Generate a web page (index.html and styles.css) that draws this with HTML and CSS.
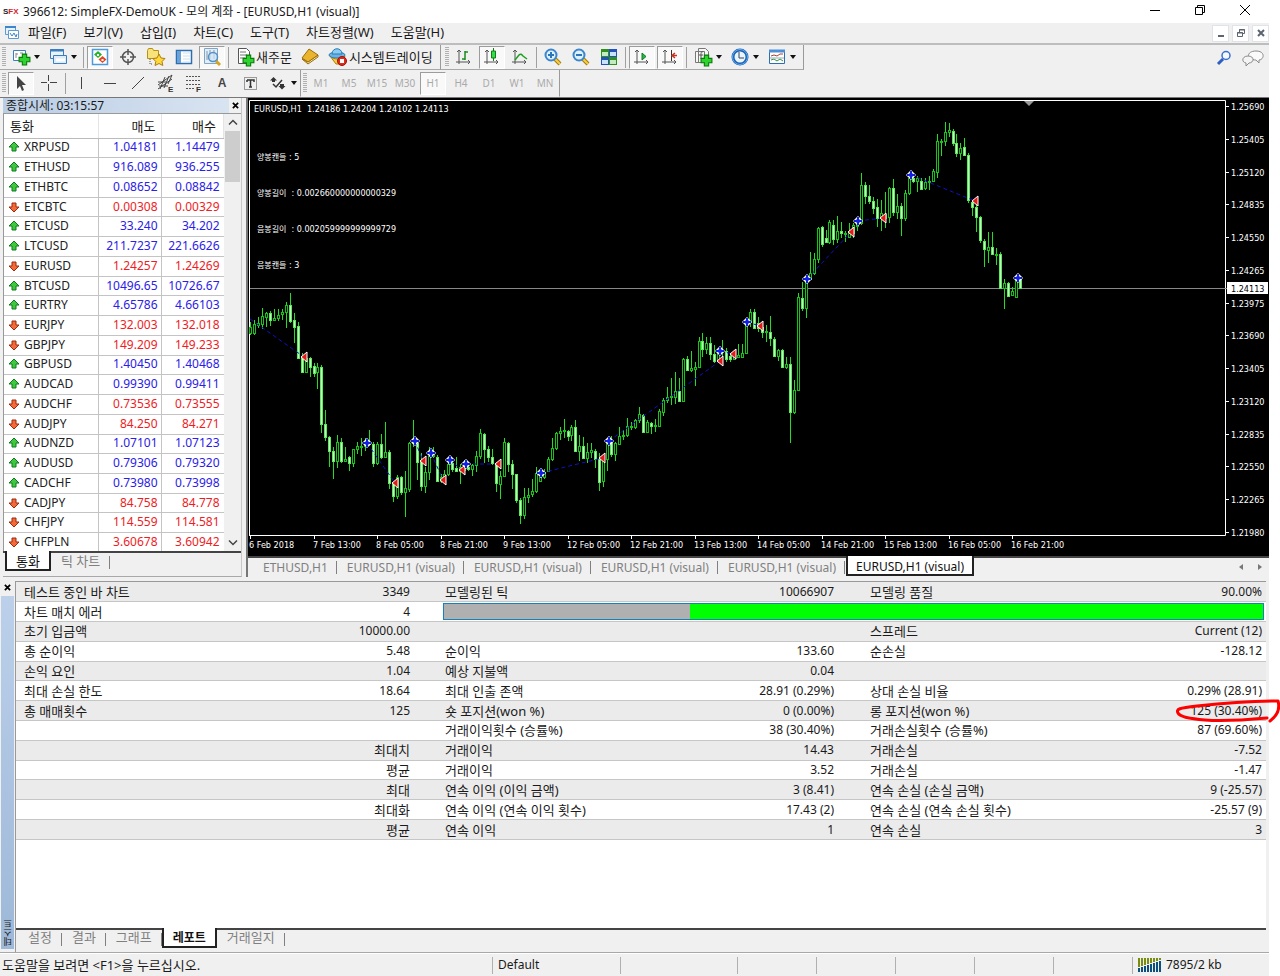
FILE: index.html
```html
<!DOCTYPE html>
<html lang="ko">
<head>
<meta charset="utf-8">
<title>396612: SimpleFX-DemoUK</title>
<link rel="stylesheet" href="styles.css">
</head>
<body>
<svg class="defs" aria-hidden="true">
  <symbol id="plus" viewBox="0 0 12 12"><path d="M4 1h4v3h3v4H8v3H4V8H1V4h3z" fill="#2fd32f" stroke="#087a08"/></symbol>
  <symbol id="axes" viewBox="0 0 20 20"><path d="M5 3v14M2 15h14M3 5l2-2 2 2M14 13l2 2-2 2" fill="none" stroke="#555"/></symbol>
  <symbol id="lens" viewBox="0 0 20 20"><path d="M12 12l5 5" stroke="#a87a10" stroke-width="4"/><path d="M12 12l5 5" stroke="#f5cf45" stroke-width="2"/><circle cx="8" cy="8" r="5.500" fill="#dff1fc" stroke="#3b86cc" stroke-width="2"/></symbol>
</svg>

<header class="titlebar">
  <span class="logo"><i>S</i>FX</span>
  <h1>396612: SimpleFX-DemoUK - 모의 계좌 - [EURUSD,H1 (visual)]</h1>
  <div class="winbtns">
    <button aria-label="최소화"><svg viewBox="0 0 12 12"><path d="M1 6.500h10" stroke="#000"/></svg></button>
    <button aria-label="이전 크기로"><svg viewBox="0 0 12 12"><path d="M1.500 3.500h7v7h-7zM3.500 3V1.500h7v7H9" fill="none" stroke="#000"/></svg></button>
    <button aria-label="닫기"><svg viewBox="0 0 12 12"><path d="M1 1l10 10M11 1L1 11" stroke="#000"/></svg></button>
  </div>
</header>

<div class="window">
<nav class="menubar">
  <svg class="menuicon" viewBox="0 0 16 16"><path d="M1.500 1.500h10v8h-10z" fill="#e4f1fb" stroke="#5d9bd0"/><path d="M1 2h11" stroke="#3b86cc" stroke-width="2"/><path d="M4.500 5.500h10v8h-10z" fill="#fff" stroke="#5d9bd0"/><path d="M6 8l2 3 2-3 2 4 1-3" fill="none" stroke="#3b86cc"/></svg>
  <button>파일(F)</button><button>보기(V)</button><button>삽입(I)</button><button>차트(C)</button><button>도구(T)</button><button>차트정렬(W)</button><button>도움말(H)</button>
  <div class="mdi">
    <button aria-label="차트 최소화"><svg viewBox="0 0 12 12"><path d="M3 9h6" stroke="#5b6470" stroke-width="2"/></svg></button>
    <button aria-label="차트 복원"><svg viewBox="0 0 12 12"><path d="M2.500 5.500h5v4h-5zM4.500 5V2.500h5v4H8M2 6h6M4 3h6" fill="none" stroke="#5b6470"/></svg></button>
    <button aria-label="차트 닫기"><svg viewBox="0 0 12 12"><path d="M3 3l6 6M9 3L3 9" stroke="#5b6470" stroke-width="2"/></svg></button>
  </div>
</nav>

<div class="toolrow">
  <div class="toolbar">
    <span class="grip"></span>
    <button class="tb drop" aria-label="새 차트"><svg viewBox="0 0 20 20"><path d="M2.500 3.500h12v10h-12z" fill="#fff" stroke="#3b7fc0"/><path d="M5 6v5M5 7h2M9 6h3" stroke="#888"/><use href="#plus" x="7" y="6" width="13" height="13"/></svg></button>
    <button class="tb drop" aria-label="프로파일"><svg viewBox="0 0 20 20"><path d="M2.500 2.500h13v9h-13z" fill="#e8f3fc" stroke="#3b7fc0"/><path d="M2 3.500h14" stroke="#3b7fc0" stroke-width="2"/><path d="M5.500 8.500h13v8h-13z" fill="#dcecf9" stroke="#3b7fc0"/><path d="M8 13h9" stroke="#fff" stroke-width="3"/></svg></button>
    <span class="sep"></span>
    <button class="tb on" aria-label="종합시세"><svg viewBox="0 0 20 20"><path d="M2.500 2.500h15v15h-15z" fill="#fff" stroke="#4a9ade" stroke-width="1.500"/><path d="M8 4l4 3.500-4 3.500-4-3.500z" fill="#28b428"/><path d="M12.500 9l4 3.500-4 3.500-4-3.500z" fill="#e04a24"/><path d="M7 7h2v2H7zM11.500 12h2v2h-2z" fill="#fff"/></svg></button>
    <button class="tb" aria-label="데이터 창"><svg viewBox="0 0 20 20"><circle cx="10" cy="10" r="5.500" fill="none" stroke="#555" stroke-width="1.500"/><path d="M10 2v6M10 12v6M2 10h6M12 10h6" stroke="#555" stroke-width="1.500"/></svg></button>
    <button class="tb" aria-label="네비게이터"><svg viewBox="0 0 20 20"><path d="M1.500 3.500l1-2h4l1 2h5v8h-11z" fill="#f8e27c" stroke="#b8920e"/><path d="M4 12v5h3" stroke="#555" fill="none" stroke-dasharray="1 1"/><path d="M13 7l2 4 4 .5-3 3 .8 4L13 16.500l-4 2 .8-4-3-3 4.200-.5z" fill="#ffd83e" stroke="#b07d08"/></svg></button>
    <button class="tb" aria-label="터미널"><svg viewBox="0 0 20 20"><path d="M2.500 3.500h15v13h-15z" fill="#fff" stroke="#2d6eb0" stroke-width="1.500"/><path d="M3 4h4v12H3z" fill="#6ba3d8"/><path d="M9 6h7M9 9h7M9 12h7M9 15h7" stroke="#cfe0f0"/></svg></button>
    <button class="tb on" aria-label="전략 테스터"><svg viewBox="0 0 20 20"><path d="M2.500 1.500h13v15h-13z" fill="#e3eef8" stroke="#7fa5c8"/><path d="M5 4v9M8 3v9M12 3v9" stroke="#8096aa"/><path d="M14 14l4 4" stroke="#d9a51c" stroke-width="3"/><circle cx="11" cy="10" r="4.500" fill="#cfe6f8aa" stroke="#5690c4" stroke-width="1.500"/></svg></button>
    <span class="sep"></span>
    <button class="tb text"><svg viewBox="0 0 20 20"><path d="M3.500 1.500h8l3 3v12h-11z" fill="#fff" stroke="#555"/><path d="M5 5h6M5 8h7M5 11h5" stroke="#777"/><use href="#plus" x="7" y="7" width="13" height="13"/></svg>새주문</button>
    <button class="tb" aria-label="메타에디터"><svg viewBox="0 0 20 20"><path d="M2 12l6 5 10-7v-2L8 15z" fill="#f6e7b0" stroke="#9a6c0c"/><path d="M2 11l7-9 9 6-10 7z" fill="#eab52d" stroke="#9a6c0c"/></svg></button>
    <button class="tb text"><svg viewBox="0 0 20 20"><path d="M2 9c3 4 12 4 15 0l-3 8H8z" fill="#f4ce3c" stroke="#b07d08"/><ellipse cx="9" cy="8" rx="8" ry="3" fill="#69b3e4" stroke="#2b7db5"/><path d="M4 7c0-7 10-7 10 0z" fill="#8accf3" stroke="#2b7db5"/><circle cx="14" cy="14" r="4.500" fill="#e02a1a" stroke="#a01208"/><path d="M12 12h4v4h-4z" fill="#fff"/></svg>시스템트레이딩</button>
  </div>
  <div class="toolbar">
    <span class="grip"></span>
    <button class="tb" aria-label="바 차트"><svg viewBox="0 0 20 20"><use href="#axes"/><path d="M11 4v9M11 5h3M8 12h3" stroke="#1c8a1c" stroke-width="1.500"/></svg></button>
    <button class="tb on" aria-label="캔들 차트"><svg viewBox="0 0 20 20"><use href="#axes"/><path d="M11.500 1v13" stroke="#167a16"/><path d="M9.500 4h4v7h-4z" fill="#2fe04a" stroke="#167a16"/></svg></button>
    <button class="tb" aria-label="라인 차트"><svg viewBox="0 0 20 20"><use href="#axes"/><path d="M5 13l4-5c2-2 3 0 4 1l4 3" stroke="#1ea01e" fill="none" stroke-width="1.500"/></svg></button>
    <span class="sep"></span>
    <button class="tb" aria-label="확대"><svg viewBox="0 0 20 20"><use href="#lens"/><path d="M5 8h6M8 5v6" stroke="#2f75ba" stroke-width="2"/></svg></button>
    <button class="tb" aria-label="축소"><svg viewBox="0 0 20 20"><use href="#lens"/><path d="M5 8h6" stroke="#2f75ba" stroke-width="2"/></svg></button>
    <button class="tb" aria-label="창 배열"><svg viewBox="0 0 20 20"><path d="M2 2h8v8H2zM10 10h8v8h-8z" fill="#2f8f1f"/><path d="M10 2h8v8h-8zM2 10h8v8H2z" fill="#2452b8"/><path d="M3 5h6v4H3zM11 5h6v4h-6zM3 13h6v4H3zM11 13h6v4h-6z" fill="#c4ecc0"/><path d="M11 5h6v4h-6zM3 13h6v4H3z" fill="#c8e2fa"/></svg></button>
    <span class="sep"></span>
    <button class="tb on" aria-label="자동 스크롤"><svg viewBox="0 0 20 20"><use href="#axes"/><path d="M10 6l4 3.500-4 3.500z" fill="#28b848" stroke="#117a22"/></svg></button>
    <button class="tb on" aria-label="차트 이동"><svg viewBox="0 0 20 20"><use href="#axes"/><path d="M11.500 3v11" stroke="#333"/><path d="M17 8.500h-4M15 6l-3 2.500 3 2.500" stroke="#c8321c" fill="none" stroke-width="1.500"/></svg></button>
    <span class="sep"></span>
    <button class="tb drop" aria-label="지표"><svg viewBox="0 0 20 20"><path d="M2.500 4.500h9v11h-9zM5.500 1.500h7l3 3v11h-10z" fill="#f6f6f6" stroke="#777"/><path d="M10 5c-2-1-2 1-2 3v4M6 8h4" stroke="#555" fill="none"/><use href="#plus" x="7" y="7" width="13" height="13"/></svg></button>
    <button class="tb drop" aria-label="주기"><svg viewBox="0 0 20 20"><circle cx="10" cy="10" r="7" fill="#e9f5fd" stroke="#1e62b4" stroke-width="3"/><circle cx="10" cy="10" r="7.500" fill="none" stroke="#60aaf0"/><path d="M9 5v6h5" fill="none" stroke="#345"/></svg></button>
    <button class="tb drop" aria-label="템플릿"><svg viewBox="0 0 20 20"><path d="M2.500 3.500h15v13h-15z" fill="#fff" stroke="#2f6fb0"/><path d="M2 4h16" stroke="#4a90d9" stroke-width="3"/><path d="M4 9l3-1 3 1 3-2h3" stroke="#b0412c" fill="none"/><path d="M4 13l3-1 3 2 3-2 3 2" stroke="#2a9a3a" fill="none"/><path d="M3 11h14" stroke="#9ab"/></svg></button>
  </div>
  <div class="toolend">
    <button aria-label="검색"><svg viewBox="0 0 16 16"><circle cx="10" cy="5.500" r="4" fill="#f4f8ff" stroke="#3a6fd0" stroke-width="1.500"/><path d="M7 9l-5 5" stroke="#2c5fc4" stroke-width="3"/></svg></button>
    <button aria-label="채팅"><svg class="chat" viewBox="0 0 22 16"><path d="M14 1c10 0 8 9 3 9v3l-3-3C4 10 4 1 14 1z" fill="#fafafa" stroke="#8a8a8a"/><path d="M6 6c7 0 6 7 1 7l-3 3v-3C-1 12 0 6 6 6z" fill="#f4f4f4" stroke="#8a8a8a"/></svg></button>
  </div>
</div>

<div class="toolrow second">
  <div class="toolbar">
    <span class="grip"></span>
    <button class="tb on" aria-label="커서"><svg viewBox="0 0 20 20"><path d="M6 3v13l3-3 2 5 2-1-2-5h4z" fill="#444"/></svg></button>
    <button class="tb" aria-label="십자선"><svg viewBox="0 0 20 20"><path d="M9.500 2v6M9.500 11v7M2 9.500h6M11 9.500h7" stroke="#444"/></svg></button>
    <span class="sep"></span>
    <button class="tb" aria-label="수직선"><svg viewBox="0 0 20 20"><path d="M9.500 4v12" stroke="#444"/></svg></button>
    <button class="tb" aria-label="수평선"><svg viewBox="0 0 20 20"><path d="M4 10.500h12" stroke="#444"/></svg></button>
    <button class="tb" aria-label="추세선"><svg viewBox="0 0 20 20"><path d="M4 16L16 4" stroke="#444"/></svg></button>
    <button class="tb" aria-label="채널"><svg viewBox="0 0 20 20"><path d="M2 12L16 2M2 16L16 6M4 16l5-12M8 15l5-12M2 9h8M3 13h9M12 11l4-9" stroke="#444"/><text x="12" y="19" class="mini">E</text></svg></button>
    <button class="tb" aria-label="피보나치"><svg viewBox="0 0 20 20"><path d="M2 3.500h15M2 7.500h15M2 11.500h15M2 15.500h8" stroke="#555" stroke-dasharray="2 1"/><text x="12" y="19" class="mini">F</text></svg></button>
    <button class="tb letter">A</button>
    <button class="tb" aria-label="텍스트 라벨"><svg viewBox="0 0 20 20"><path d="M4.500 4.500h12v12h-12z" fill="none" stroke="#444" stroke-dasharray="1 1"/><path d="M7 7h7v2M10.500 7v7M7 7v2M9 14h3" fill="none" stroke="#333" stroke-width="1.500"/></svg></button>
    <button class="tb drop" aria-label="화살표"><svg viewBox="0 0 20 20"><path d="M5.500 4l3.500 3.500H7V9H4V7.500H2zM14 16.500L10.500 13H12v-2h4v2h1.500z" fill="#333"/><path d="M5 11l3 3 6-7" fill="none" stroke="#333" stroke-width="1.500"/></svg></button>
  </div>
  <div class="toolbar tf">
    <span class="grip"></span>
    <button class="tb">M1</button><button class="tb">M5</button><button class="tb">M15</button><button class="tb">M30</button><button class="tb on">H1</button><button class="tb">H4</button><button class="tb">D1</button><button class="tb">W1</button><button class="tb">MN</button>
  </div>
</div>

<main class="workspace">
  <aside class="watch">
    <div class="watchtitle"><h2>종합시세: 03:15:57</h2><button class="x" aria-label="종합시세 닫기"><svg viewBox="0 0 8 8"><path d="M1 1l6 6M7 1L1 7" stroke="#000" stroke-width="2"/></svg></button></div>
    <div class="watchbody">
      <div class="clip">
      <table class="quotes">
        <thead><tr><th>통화</th><th>매도</th><th>매수</th></tr></thead>
        <tbody id="quotes"></tbody>
      </table>
      </div>
      <div class="scroll"><svg viewBox="0 0 16 16"><path d="M4 10l4-4 4 4" fill="none" stroke="#444" stroke-width="1.500"/></svg><span class="thumb"></span><svg class="down" viewBox="0 0 16 16"><path d="M4 6l4 4 4-4" fill="none" stroke="#444" stroke-width="1.500"/></svg></div>
    </div>
    <div class="tabs"><button class="active">통화</button><button>틱 차트</button></div>
  </aside>

  <section class="chartpane">
    <svg id="chart" viewBox="248 98 1020 458" preserveAspectRatio="xMinYMin meet" role="img" aria-label="EURUSD H1"></svg>
    <div class="tabs charttabs">
      <button>ETHUSD,H1</button><button>EURUSD,H1 (visual)</button><button>EURUSD,H1 (visual)</button><button>EURUSD,H1 (visual)</button><button>EURUSD,H1 (visual)</button><button class="active">EURUSD,H1 (visual)</button>
      <span class="tabnav"><svg viewBox="0 0 8 8"><path d="M6 1v6L2 4z" fill="#777"/></svg><svg viewBox="0 0 8 8"><path d="M2 1v6l4-3z" fill="#777"/></svg></span>
    </div>
  </section>
</main>

<section class="tester">
  <div class="strip"><button class="x" aria-label="테스터 닫기"><svg viewBox="0 0 8 8"><path d="M1 1l6 6M7 1L1 7" stroke="#000" stroke-width="2"/></svg></button><div class="spine">테스트</div></div>
  <div class="report">
    <div class="sheet">
    <table class="results">
      <colgroup><col class="c1"><col class="c2"><col class="c3"><col class="c4"><col class="c5"><col class="c6"></colgroup>
      <tr><td>테스트 중인 바 차트</td><td>3349</td><td>모델링된 틱</td><td>10066907</td><td>모델링 품질</td><td>90.00%</td></tr>
      <tr><td>차트 매치 에러</td><td>4</td><td colspan="4" class="barcell"><div class="bar"><span></span></div></td></tr>
      <tr><td>초기 입금액</td><td>10000.00</td><td></td><td></td><td>스프레드</td><td>Current (12)</td></tr>
      <tr><td>총 순이익</td><td>5.48</td><td>순이익</td><td>133.60</td><td>순손실</td><td>-128.12</td></tr>
      <tr><td>손익 요인</td><td>1.04</td><td>예상 지불액</td><td>0.04</td><td></td><td></td></tr>
      <tr><td>최대 손실 한도</td><td>18.64</td><td>최대 인출 존액</td><td>28.91 (0.29%)</td><td>상대 손실 비율</td><td>0.29% (28.91)</td></tr>
      <tr><td>총 매매횟수</td><td>125</td><td>숏 포지션(won %)</td><td>0 (0.00%)</td><td>롱 포지션(won %)</td><td><span class="marked">125 (30.40%)<svg viewBox="0 0 106 26"><path d="M104 3C78 3 41 6 23 8S2 11 4 15s14 6 27 7 40 0 62-2M104 3c2 7 0 14-8 20" fill="none" stroke="#f00" stroke-width="3" stroke-linecap="round"/></svg></span></td></tr>
      <tr><td></td><td></td><td>거래이익횟수 (승률%)</td><td>38 (30.40%)</td><td>거래손실횟수 (승률%)</td><td>87 (69.60%)</td></tr>
      <tr><td></td><td class="ko">최대치</td><td>거래이익</td><td>14.43</td><td>거래손실</td><td>-7.52</td></tr>
      <tr><td></td><td class="ko">평균</td><td>거래이익</td><td>3.52</td><td>거래손실</td><td>-1.47</td></tr>
      <tr><td></td><td class="ko">최대</td><td>연속 이익 (이익 금액)</td><td>3 (8.41)</td><td>연속 손실 (손실 금액)</td><td>9 (-25.57)</td></tr>
      <tr><td></td><td class="ko">최대화</td><td>연속 이익 (연속 이익 횟수)</td><td>17.43 (2)</td><td>연속 손실 (연속 손실 횟수)</td><td>-25.57 (9)</td></tr>
      <tr><td></td><td class="ko">평균</td><td>연속 이익</td><td>1</td><td>연속 손실</td><td>3</td></tr>
    </table>
    </div>
    <div class="tabs"><button>설정</button><button>결과</button><button>그래프</button><button class="active bold">레포트</button><button>거래일지</button></div>
  </div>
</section>

<footer class="status">
  <span class="help">도움말을 보려면 &lt;F1&gt;을 누르십시오.</span><span class="s1">Default</span><span class="s2"></span><span class="s3"></span><span class="s3"></span><span class="s3"></span><span class="s3"></span><span class="s3"></span><span class="net"><svg id="signal" viewBox="0 0 24 14"></svg>7895/2 kb</span>
</footer>
</div>
<script src="app.js"></script>
</body>
</html>
```
FILE: styles.css
```css
* { box-sizing: border-box; }
body { margin: 0; height: 100vh; display: flex; flex-direction: column; overflow: hidden; background: #fff; color: #1a1a1a; font: 12px/16px "Noto Sans", "Noto Sans CJK KR", sans-serif; }
h1, h2 { margin: 0; font-weight: 400; }
button { border: 0; padding: 0; margin: 0; background: none; font: inherit; color: inherit; white-space: nowrap; }
svg { display: block; flex: none; }
.defs { position: absolute; width: 0; height: 0; }

.titlebar { height: 23px; flex: none; display: flex; align-items: center; padding-left: 3px; }
.titlebar h1 { flex: 1; font-size: 12px; }
.logo { width: 20px; font: bold 8px/12px "Liberation Sans", sans-serif; color: #d81e2c; }
.logo i { font-style: normal; color: #222; }
.winbtns { display: flex; padding: 0 13px 3px 0; }
.winbtns button { width: 45px; display: grid; place-items: center; }
.winbtns svg { width: 12px; height: 12px; }

.window { flex: 1; min-height: 0; display: flex; flex-direction: column; margin-right: 11px; background: #f0f0f0; }
.menubar { height: 20px; flex: none; display: flex; align-items: center; gap: 17px; padding-left: 4px; font-size: 13px; }
.menubar > button { line-height: 14px; padding-bottom: 2px; }
.menuicon { width: 16px; height: 16px; margin-right: -9px; }
.mdi { margin-left: auto; display: flex; gap: 3px; }
.mdi button { width: 17px; height: 17px; background: #fff; border: 1px solid #e0e4ea; display: grid; place-items: center; }
.mdi svg { width: 12px; height: 12px; }

.toolrow { height: 27px; flex: none; display: flex; border-top: 2px solid #bdbdbd; }
.toolrow.second { border-top: 0; }
.toolbar { display: flex; align-items: center; border-right: 1px solid #9a9a9a; border-bottom: 1px solid #a8a8a8; padding-right: 3px; }
.second .toolbar { border-bottom-color: #f0f0f0; padding-right: 0; }
.grip { width: 4px; height: 20px; margin: 0 1px 0 2px; background: repeating-linear-gradient(#b0b0b0 0 1px, #f0f0f0 1px 2px); }
.toolbar + .toolbar .grip { margin-left: 4px; }
.sep { width: 1px; height: 21px; margin: 0 2px; background: #a0a0a0; }
.tb { width: 28px; height: 23px; display: flex; align-items: center; justify-content: center; font-size: 13px; }
.tb svg { width: 20px; height: 20px; }
.tb.on { width: 26px; margin: 0 1px; background: #f9f9f9; border: 1px solid #9c9c9c; border-right-color: #fff; border-bottom-color: #fff; }
.tb.drop { width: 37px; }
.second .tb.drop { width: 36px; }
.tb.drop::after { content: ""; margin-left: 3px; border: 3px solid transparent; border-top: 4px solid #111; border-bottom: 0; }
.tb.text { width: auto; padding: 0 4px; gap: 1px; }
.tb.letter { font: bold 12px "Liberation Sans", sans-serif; color: #444; }
.mini { font: bold 8px "Liberation Sans", sans-serif; fill: #333; }
.tf .tb { font-size: 10px; color: #aaa; }
.second .tf .grip { margin: 0 0 0 2px; }
.toolend { margin-left: auto; display: flex; align-items: center; gap: 10px; padding-right: 5px; }
.toolend svg { width: 16px; height: 16px; }
.toolend .chat { width: 22px; }

.workspace { flex: none; display: flex; gap: 4px; height: 480px; border-top: 1px solid #777; }
.watch { flex: none; width: 239px; margin-left: 3px; display: flex; flex-direction: column; border-right: 1px solid #c8c8c8; border-bottom: 1px solid #a8a8a8; }
.watchtitle { height: 16px; display: flex; justify-content: space-between; align-items: center; border-bottom: 1px solid #999; background: linear-gradient(90deg, #b9cde4, #d9e4f1 95%, #f0f0f0 95%); padding: 0 2px 0 3px; }
.watchtitle h2 { font-size: 12px; line-height: 14px; }
.x { width: 8px; height: 8px; display: grid; place-items: center; }
.x svg { width: 7px; height: 7px; }
.watchbody { flex: 1; min-height: 0; display: flex; border-left: 1px solid #999; background: #fff; }
.clip { flex: 1; overflow: hidden; }
.quotes { width: 100%; height: 439px; border-collapse: collapse; table-layout: fixed; }
.quotes th { height: 24px; padding: 0 7px; text-align: right; font-weight: 400; font-size: 13px; border-right: 1px solid #e4e4e4; border-bottom: 1px solid #bbb; }
.quotes th:first-child { width: 94px; text-align: left; padding-left: 6px; }
.quotes th:nth-child(2) { width: 63px; padding-right: 5px; }
.quotes td { height: 19px; padding: 0 3px 1px; line-height: 14px; text-align: right; border-right: 1px solid #c4c4c4; border-bottom: 1px solid #c4c4c4; color: #2a20e8; }
.quotes td:last-child { border-right: 0; padding-right: 4px; }
.quotes td:first-child { color: #222; text-align: left; padding-left: 4px; }
.quotes .down td:not(:first-child) { color: #ee1c24; }
.sym { display: flex; align-items: center; gap: 4px; }
.sym svg { width: 12px; height: 12px; }
.scroll { width: 17px; background: #f0f0f0; display: flex; flex-direction: column; align-items: center; }
.scroll svg { width: 16px; height: 17px; }
.thumb { width: 15px; height: 51px; background: #cdcdcd; }
.scroll .down { margin-top: auto; }

.tabs { height: 24px; flex: none; display: flex; align-items: flex-start; border-top: 2px solid #444; color: #808080; font-size: 13px; background: #f0f0f0; }
.tabs button { height: 16px; line-height: 14px; padding: 0 10px; position: relative; }
.tabs button:not(.active)::after { content: ""; position: absolute; right: 0; top: 3px; height: 13px; border-right: 1px solid #808080; }
.tabs .active { background: #fff; color: #111; margin-top: -2px; height: 20px; border: 2px solid #222; border-top: 0; padding: 2px 9px 0; }
.watch .tabs { padding-left: 2px; height: 25px; }
.report .tabs { padding-left: 2px; }
.report .tabs button:not(.active) { height: 14px; }
.tabs .bold { font-weight: 700; font-size: 12px; }

.chartpane { flex: 1; min-width: 0; display: flex; flex-direction: column; border-left: 2px solid #777; }
#chart { width: 100%; height: 458px; background: #000; }
#chart text { font: 9px "DejaVu Sans Condensed", "Noto Sans CJK KR", sans-serif; fill: #fff; }
#chart .note { font-family: "DejaVu Sans", "Noto Sans CJK KR", sans-serif; font-size: 8px; }
#chart .now { fill: #000; }
.charttabs.tabs { font-size: 12px; height: 21px; padding-left: 6px; gap: 1px; }
.charttabs button { padding: 3px 9px 0; }
.charttabs .active { padding: 4px 8px 0; }
.tabnav { margin-left: auto; display: flex; gap: 11px; padding: 5px; }
.tabnav svg { width: 8px; height: 8px; }

.tester { flex: 1; min-height: 0; display: flex; margin-top: 4px; border-bottom: 1px solid #a8a8a8; background: #f0f0f0; }
.strip { width: 15px; display: flex; flex-direction: column; align-items: center; gap: 5px; padding: 2px 1px 3px 0; }
.spine { flex: 1; width: 13px; background: linear-gradient(#9db8d8, #bcd0ea); writing-mode: vertical-rl; transform: rotate(180deg); font-size: 9px; line-height: 13px; padding-top: 3px; }
.report { flex: 1; display: flex; flex-direction: column; border-left: 1px solid #999; border-top: 1px solid #999; margin-right: 3px; }
.sheet { flex: 1; min-height: 0; background: #fff; }
.results { width: 100%; height: 258px; border-collapse: collapse; table-layout: fixed; }
.results td { height: 19px; padding: 0; line-height: 16px; border-bottom: 1px solid #c6c6c6; white-space: nowrap; }
.results tr:nth-child(odd) { background: #ebebeb; }
.results td:nth-child(odd) { padding-left: 8px; font-size: 13px; }
.results td:nth-child(even) { text-align: right; padding-right: 4px; }
.results .ko { font-size: 13px; }
.c1 { width: 16%; } .c2 { width: 16%; } .c3 { width: 17%; } .c4 { width: 17%; } .c5 { width: 17%; }
.results td:nth-child(odd):not(:first-child) { padding-left: 29px; }
.results td:nth-child(2) { padding-right: 6px; }
.results td:nth-child(4) { padding-right: 7px; }
.results .barcell.barcell.barcell { padding: 0 2px 0 27px; }
.bar { height: 17px; background: #0f0; border: 1px solid #1683b8; }
.bar span { display: block; height: 100%; width: 30%; background: #b0b0b0; }
.marked { position: relative; }
.marked svg { position: absolute; right: -18px; top: -4px; width: 106px; height: 26px; }

.status { height: 23px; flex: none; display: flex; align-items: center; border-top: 1px solid #fff; }
.status span { height: 17px; border-left: 1px solid #b0b0b0; }
.status .help { flex: 1; border: 0; padding-left: 2px; font-size: 13px; }
.status .s1 { width: 128px; padding-left: 5px; }
.status .s2 { width: 117px; }
.status .s3 { width: 79px; }
.status .net { width: 137px; display: flex; gap: 4px; padding-left: 5px; align-items: center; }
.net svg { width: 24px; height: 14px; }
```
FILE: app.js
```js
const quotes = `XRPUSD 1.04181 1.14479 u
ETHUSD 916.089 936.255 u
ETHBTC 0.08652 0.08842 u
ETCBTC 0.00308 0.00329 d
ETCUSD 33.240 34.202 u
LTCUSD 211.7237 221.6626 u
EURUSD 1.24257 1.24269 d
BTCUSD 10496.65 10726.67 u
EURTRY 4.65786 4.66103 u
EURJPY 132.003 132.018 d
GBPJPY 149.209 149.233 d
GBPUSD 1.40450 1.40468 u
AUDCAD 0.99390 0.99411 u
AUDCHF 0.73536 0.73555 d
AUDJPY 84.250 84.271 d
AUDNZD 1.07101 1.07123 u
AUDUSD 0.79306 0.79320 u
CADCHF 0.73980 0.73998 u
CADJPY 84.758 84.778 d
CHFJPY 114.559 114.581 d
CHFPLN 3.60678 3.60942 d`.split("\n").map(r => r.split(" "));

const arrow = dir => dir === "u"
  ? '<svg viewBox="0 0 12 12"><path d="M6 1l5 5H8v4H4V6H1z" fill="#3fc83f" stroke="#0d7a1d"/></svg>'
  : '<svg viewBox="0 0 12 12"><path d="M6 11l5-5H8V2H4v4H1z" fill="#f2693a" stroke="#9c2a0c"/></svg>';

document.getElementById("quotes").innerHTML = quotes.map(([s, bid, ask, d]) =>
  `<tr class="${d === "d" ? "down" : "up"}"><td><span class="sym">${arrow(d)}${s}</span></td><td>${bid}</td><td>${ask}</td></tr>`).join("");

// Each candle: high, body top, body bottom, low, direction.
const candles = `322 327 333 335 u,320 324 333 335 u,317 323 325 328 u,308 316 324 329 u,312 313 317 327 u,311 313 320 326 d,309 318 320 321 u,309 315 318 321 u,309 312 314 320 u,302 305 312 328 u,
293 305 321 323 d,313 320 327 343 d,322 326 358 359 d,353 358 372 373 d,352 358 372 373 u,357 358 367 377 d,363 366 373 377 d,363 367 372 389 u,365 367 424 433 d,410 424 437 441 d,
436 437 451 467 d,447 451 461 479 d,435 442 461 468 u,438 442 461 463 d,447 459 461 462 u,456 457 463 471 d,449 449 463 467 u,442 446 449 454 u,438 446 446 456 u,438 442 446 451 u,
430 443 444 446 u,442 444 463 467 d,442 444 463 465 u,434 444 457 459 d,422 452 457 458 u,450 452 483 489 d,482 483 496 502 d,475 477 496 499 u,476 477 492 495 d,471 488 492 517 u,
442 443 489 492 u,420 440 443 447 u,440 443 462 480 d,453 460 486 491 d,467 472 486 493 u,447 456 472 480 u,447 452 456 458 u,455 457 481 482 d,474 477 481 483 u,470 474 477 479 u,
462 464 474 476 u,462 463 469 472 d,457 468 471 472 d,464 467 471 484 u,460 463 470 472 u,462 467 469 471 d,464 465 469 476 u,451 456 465 472 u,429 433 456 459 u,433 434 449 463 d,
446 449 457 462 d,449 457 463 465 d,462 464 483 492 d,471 476 484 499 u,438 442 476 477 u,442 443 464 472 d,460 464 474 489 d,474 474 500 503 d,498 500 515 524 d,488 497 515 519 u,
488 495 497 503 u,479 491 494 497 u,467 473 491 493 u,472 477 481 481 u,469 472 477 479 u,457 459 471 472 u,438 448 459 461 u,432 433 448 450 u,427 431 433 440 u,419 430 431 438 u,
430 431 436 441 d,425 427 435 441 u,420 427 451 452 d,435 446 451 461 u,437 446 458 459 d,443 452 458 463 u,443 450 452 458 u,449 451 459 468 d,453 459 482 491 d,458 459 481 487 u,
440 442 459 471 u,436 442 454 457 d,442 443 454 461 u,427 436 444 445 u,430 435 436 440 u,418 426 435 437 u,422 426 427 430 u,419 420 427 429 u,407 414 420 423 u,414 415 432 433 d,
420 422 432 433 u,422 423 426 434 d,419 425 426 432 u,409 411 426 427 u,398 400 412 416 u,387 397 400 403 u,378 396 397 405 u,372 391 397 404 u,378 391 401 401 d,358 359 401 402 u,
356 359 370 371 d,351 368 370 372 u,362 367 369 386 u,337 341 367 367 u,333 341 349 357 d,337 343 349 354 u,337 343 354 360 d,345 354 361 363 d,348 352 361 363 u,340 350 352 358 u,
348 351 359 362 d,353 356 359 362 d,350 356 359 359 u,344 355 357 357 u,344 353 357 358 u,322 323 353 354 u,309 312 322 327 u,309 312 328 329 d,317 323 328 332 d,322 327 332 338 d,
325 331 332 342 u,316 332 338 346 d,337 339 356 357 d,349 350 356 361 u,349 350 367 368 d,357 364 367 369 u,357 364 412 443 d,380 390 412 414 u,293 297 390 391 u,282 298 308 311 d,
278 282 308 318 u,252 273 279 280 u,253 259 273 275 u,227 228 259 263 u,226 227 244 247 d,230 238 242 243 d,220 222 242 244 u,220 225 239 245 d,216 231 239 243 u,222 231 233 238 d,
231 233 234 242 u,223 233 237 238 u,223 225 233 238 u,218 223 226 231 u,173 185 223 225 u,182 185 196 204 d,185 196 201 204 d,197 201 208 214 d,199 207 218 227 d,200 213 218 231 u,
192 214 218 228 u,187 188 217 223 u,179 188 212 216 d,194 206 212 219 u,203 206 218 236 d,190 193 218 221 u,175 178 193 195 u,177 178 181 183 d,176 178 181 192 u,178 181 189 190 d,
178 182 188 190 u,176 181 182 190 u,169 171 181 182 u,134 141 172 178 u,139 141 142 156 u,122 132 141 146 u,123 130 132 137 u,129 131 143 146 d,134 143 153 157 d,143 148 153 160 u,
138 147 155 156 d,153 155 200 203 d,200 202 207 216 d,203 207 217 232 d,216 217 240 243 d,239 241 249 267 d,232 247 250 263 u,232 247 254 255 d,248 254 255 265 u,252 254 288 288 d,
279 283 288 309 u,282 283 296 297 d,287 291 295 296 u,278 280 297 298 u,277 279 288 289 d`.split(",").map(c => c.trim().split(" "));

// Entry and exit points of every trade: x1, y1, x2, y2.
const trades = [[250, 319, 304, 357], [367, 443, 395, 483], [415, 441, 423, 461], [431, 453, 443, 480], [450, 460, 462, 470], [466, 464, 498, 464],
  [541, 473, 602, 458], [609, 441, 720, 361], [720, 351, 733, 354], [747, 322, 760, 326], [807, 279, 851, 232], [858, 221, 883, 218], [911, 175, 975, 201], [1018, 278, 0, 0]];

const prices = ["1.25690", "1.25405", "1.25120", "1.24835", "1.24550", "1.24265", "1.23975", "1.23690", "1.23405", "1.23120", "1.22835", "1.22550", "1.22265", "1.21980"];
const dates = ["6 Feb 2018", "7 Feb 13:00", "8 Feb 05:00", "8 Feb 21:00", "9 Feb 13:00", "12 Feb 05:00", "12 Feb 21:00", "13 Feb 13:00", "14 Feb 05:00", "14 Feb 21:00", "15 Feb 13:00", "16 Feb 05:00", "16 Feb 21:00"];

let out = '<path d="M249.500 535V100.500H1225.500V535.500H249" fill="none" stroke="#fff"/><path d="M250 288.500H1268" stroke="#888"/><path d="M1024 101h10l-5 5z" fill="#999"/>';
const step = (1020.5 - 250.5) / (candles.length - 1);
candles.forEach(([h, t, b, l, d], i) => {
  const x = Math.round(250 + i * step);
  const height = Math.max(1, b - t);
  out += `<path d="M${x + .5} ${h}V${t}M${x + .5} ${b}V${l}" stroke="#22dd22"/>`;
  out += `<rect x="${x - .5}" y="${+t + .5}" width="2" height="${height}" fill="${d === "d" ? "#c4ffc4" : "#000"}" stroke="${d === "d" ? "#58ee58" : "#16c416"}"/>`;
});
trades.forEach(([x1, y1, x2, y2]) => {
  if (x2) out += `<path d="M${x1} ${y1}L${x2} ${y2}" stroke="#1010c8" stroke-dasharray="4 3"/>`;
});
trades.forEach(([x1, y1, x2, y2]) => {
  if (x1 > 250) out += `<path d="M${x1} ${y1 - 5}l5 5-5 5-5-5z" fill="#fff"/><path d="M${x1 - 4} ${y1}h8M${x1} ${y1 - 4}v8" stroke="#1420e0" stroke-width="2"/><path d="M${x1} ${y1 - 3}l3 3-3 3-3-3z" fill="#1420e0"/>`;
  if (x2) out += `<path d="M${x2 - 3} ${y2}l6-5v10z" fill="#e81818" stroke="#fff"/>`;
});
prices.forEach((price, i) => {
  const y = Math.round(106 + i * 426 / 13);
  out += `<path d="M1226 ${y + .5}h3" stroke="#fff"/><text x="1231" y="${y + 4}">${price}</text>`;
});
out += '<rect x="1227" y="282" width="41" height="12" fill="#fff"/><text class="now" x="1231" y="292">1.24113</text>';
dates.forEach((label, i) => {
  const x = Math.round(249 + i * 63.5);
  out += `<path d="M${x + 1.5} 536v3" stroke="#fff"/><text x="${x}" y="548">${label}</text>`;
});
out += '<text x="254" y="112">EURUSD,H1&#160; 1.24186 1.24204 1.24102 1.24113</text>';
[["양봉캔들 : 5", 160], ["양봉길이&#160; : 0.002660000000000329", 196], ["음봉길이&#160; : 0.002059999999999729", 232], ["음봉캔들 : 3", 268]].forEach(([t, y]) => {
  out += `<text class="note" x="257" y="${y}">${t}</text>`;
});
document.getElementById("chart").innerHTML = out;

let bars = "";
for (let i = 0; i < 8; i++) {
  bars += `<path d="M${i * 3 + 1} 0v${9 - i}" stroke="#7a8c10" stroke-width="2"/><path d="M${i * 3 + 1} ${10 - i}V14" stroke="#0c4f7c" stroke-width="2"/>`;
}
document.getElementById("signal").innerHTML = bars;
```
